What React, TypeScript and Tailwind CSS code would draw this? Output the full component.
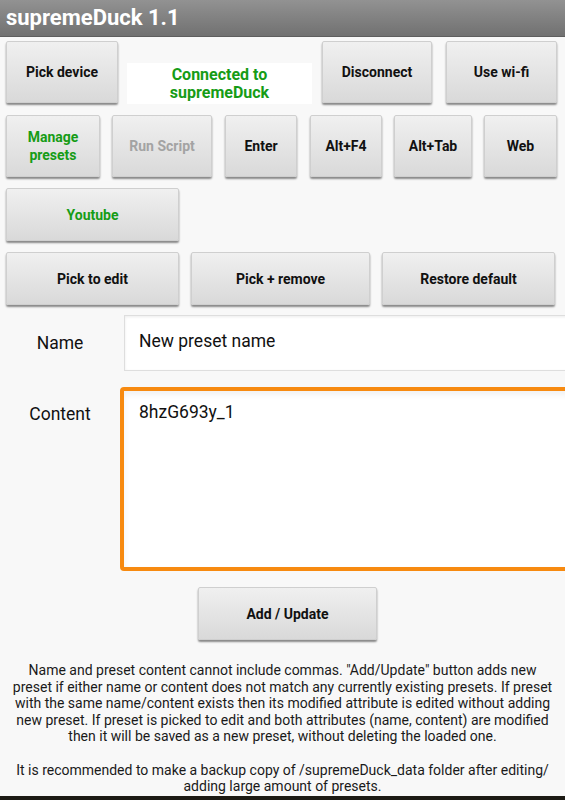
import type { ReactNode } from 'react';

const font = { fontFamily: 'Roboto, "Liberation Sans", sans-serif' };

function Btn({
  children,
  className = '',
  tone = 'dark',
}: {
  children: ReactNode;
  className?: string;
  tone?: 'dark' | 'green' | 'disabled';
}) {
  const color =
    tone === 'green' ? 'text-[#169c16]' : tone === 'disabled' ? 'text-[#a3a3a3]' : 'text-[#111]';
  return (
    <button
      className={`flex items-center justify-center shrink-0 rounded-[2px] border border-[#cfcfcf] bg-gradient-to-b from-[#f0f0f0] to-[#d9d9d9] shadow-[0_2px_2px_rgba(0,0,0,0.45)] text-[14px] font-bold leading-[18px] text-center ${color} ${className}`}
    >
      {children}
    </button>
  );
}

export default function App() {
  return (
    <div className="w-[565px] h-[800px] bg-[#f8f8f8] flex flex-col overflow-hidden" style={font}>
      {/* title bar */}
      <div className="h-[37px] shrink-0 bg-gradient-to-b from-[#929292] to-[#717171] border-b border-[#5e5e5e] flex items-center px-[6px]">
        <span className="text-white text-[22px] font-bold leading-none">supremeDuck 1.1</span>
      </div>

      {/* row 1 */}
      <div className="flex items-end px-[6px] pt-[4px] h-[66px]">
        <Btn className="w-[112px] h-[62px]">Pick device</Btn>
        <div className="ml-[9px] w-[185px] h-[41px] shrink-0 bg-white flex items-center justify-center text-center text-[16px] font-bold leading-[18px] text-[#169c16] mb-[-1px]">
          Connected to
          <br />
          supremeDuck
        </div>
        <Btn className="ml-[10px] w-[110px] h-[62px]">Disconnect</Btn>
        <Btn className="ml-[14px] w-[111px] h-[62px]">Use wi-fi</Btn>
      </div>

      {/* row 2 */}
      <div className="flex px-[6px] mt-[12px]">
        <Btn tone="green" className="w-[94px] h-[62px]">
          Manage
          <br />
          presets
        </Btn>
        <Btn tone="disabled" className="ml-[12px] w-[100px] h-[62px]">Run Script</Btn>
        <Btn className="ml-[13px] w-[72px] h-[62px]">Enter</Btn>
        <Btn className="ml-[13px] w-[72px] h-[62px]">Alt+F4</Btn>
        <Btn className="ml-[12px] w-[78px] h-[62px]">Alt+Tab</Btn>
        <Btn className="ml-[12px] w-[73px] h-[62px]">Web</Btn>
      </div>

      {/* row 3 */}
      <div className="flex px-[6px] mt-[11px]">
        <Btn tone="green" className="w-[173px] h-[53px]">Youtube</Btn>
      </div>

      {/* row 4 */}
      <div className="flex px-[6px] mt-[11px]">
        <Btn className="w-[173px] h-[53px]">Pick to edit</Btn>
        <Btn className="ml-[12px] w-[179px] h-[53px]">Pick + remove</Btn>
        <Btn className="ml-[12px] w-[173px] h-[53px]">Restore default</Btn>
      </div>

      {/* name */}
      <div className="flex items-center mt-[10px]">
        <div className="w-[120px] shrink-0 text-center text-[17.5px] text-[#111]">Name</div>
        <div className="ml-[4px] w-[450px] h-[56px] shrink-0 bg-white border border-[#dedede] shadow-[inset_0_1px_3px_rgba(0,0,0,0.08)] flex items-start pt-[12px] px-[14px] text-[17.5px] text-[#111]">
          New preset name
        </div>
      </div>

      {/* content */}
      <div className="flex mt-[16px]">
        <div className="w-[120px] shrink-0 text-center text-[17.5px] text-[#111] pt-[14px]">Content</div>
        <div className="w-[455px] h-[184px] shrink-0 bg-white border-[4px] border-[#f78a10] rounded-[4px] shadow-[inset_0_4px_6px_rgba(0,0,0,0.06)] px-[15px] pt-[8px] text-[17.5px] text-[#111]">
          8hzG693y_1
        </div>
      </div>

      {/* add / update */}
      <div className="flex justify-center mt-[16px] pl-[10px]">
        <Btn className="w-[179px] h-[53px]">Add / Update</Btn>
      </div>

      {/* help text */}
      <div className="mt-[22px] px-[8px] text-center text-[14px] leading-[16.6px] text-[#1a1a1a]">
        <p>
          Name and preset content cannot include commas. "Add/Update" button adds new preset if either name or content does
          not match any currently existing presets. If preset with the same name/content exists then its modified attribute
          is edited without adding new preset. If preset is picked to edit and both attributes (name, content) are modified
          then it will be saved as a new preset, without deleting the loaded one.
        </p>
        <p className="mt-[16.6px]">
          It is recommended to make a backup copy of /supremeDuck_data folder after editing/ adding large amount of presets.
        </p>
      </div>
      <div className="flex-1" />
      <div className="h-[4px] shrink-0 bg-[#1c1a14]" />
    </div>
  );
}
